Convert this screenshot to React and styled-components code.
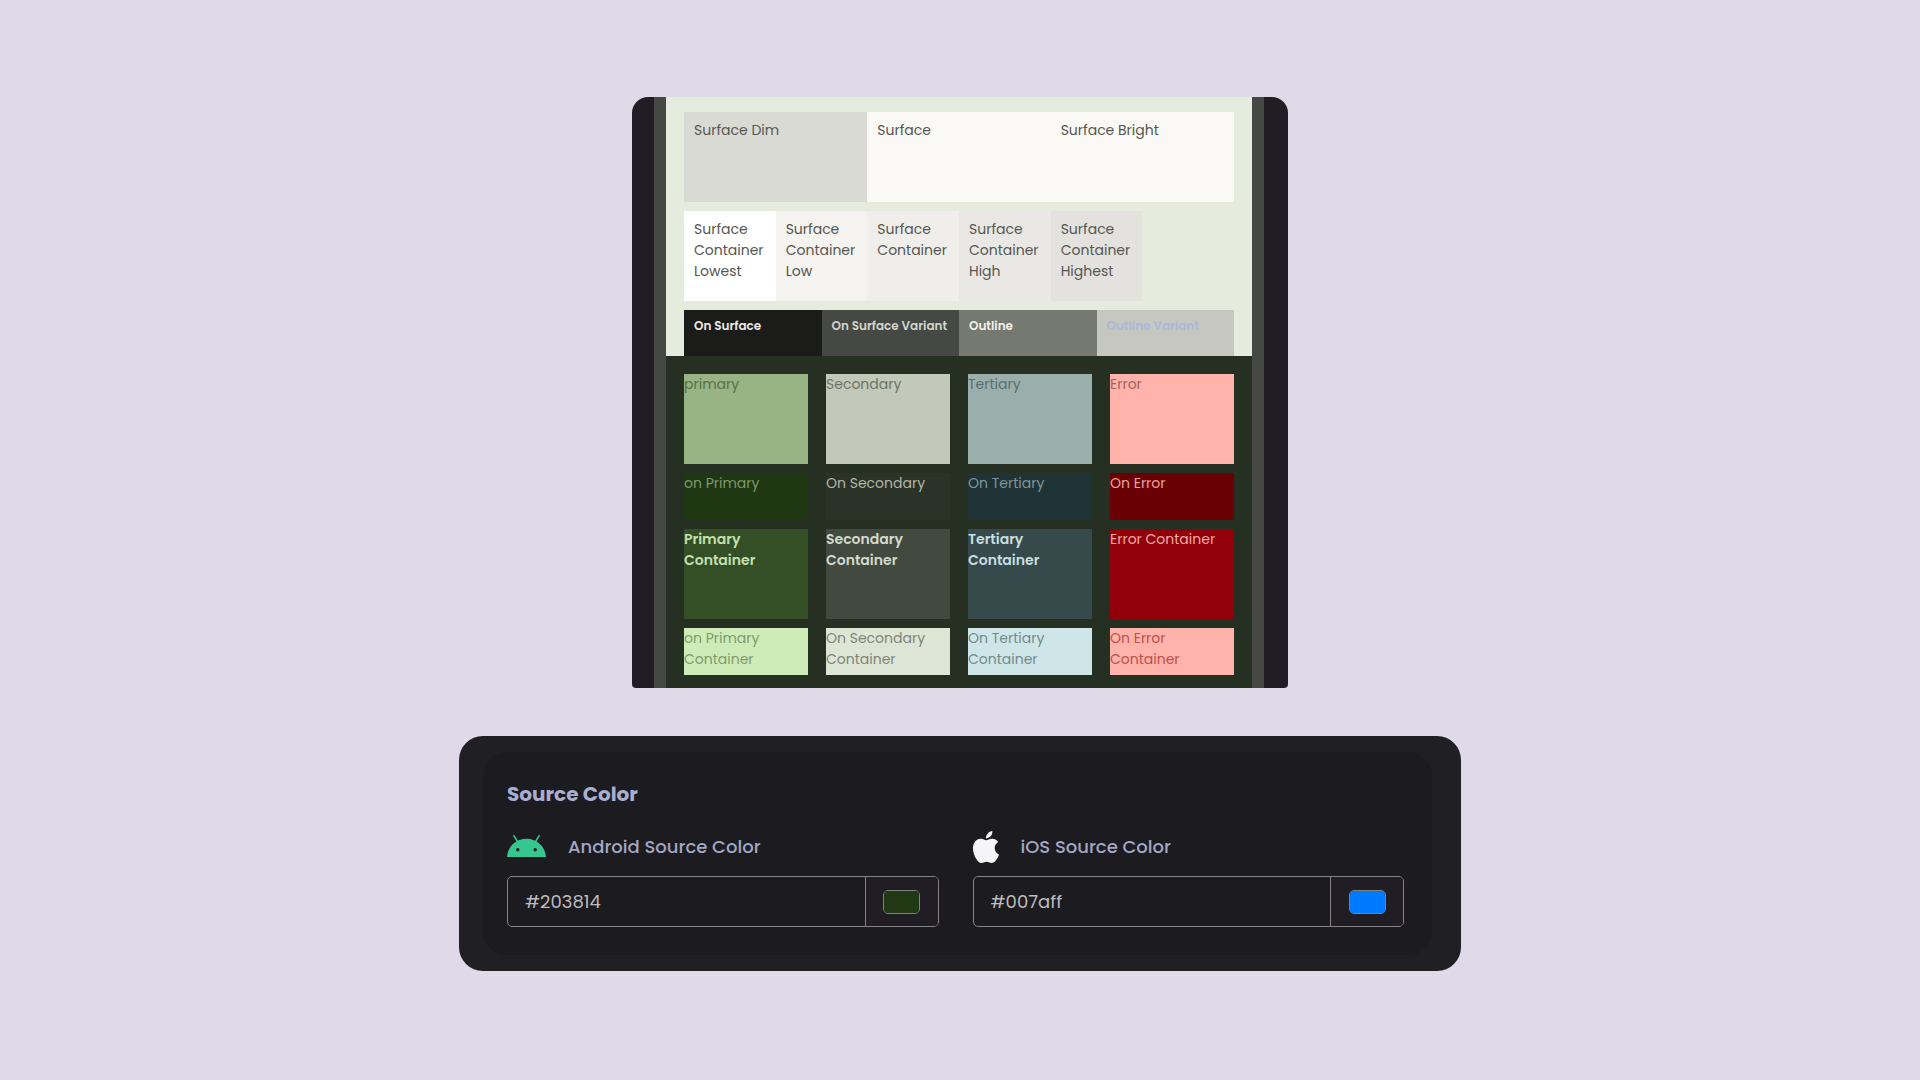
import React, { useState } from 'react'
import styled, { createGlobalStyle } from 'styled-components'
import { SiApple } from 'react-icons/si'

const surfaces = [
  { name: 'Surface Dim', bg: '#dadad5' },
  { name: 'Surface', bg: '#faf9f5' },
  { name: 'Surface Bright', bg: '#faf9f5' },
]

const containers = [
  { name: 'Surface Container Lowest', bg: '#ffffff' },
  { name: 'Surface Container Low', bg: '#f4f3ef' },
  { name: 'Surface Container', bg: '#efeeea' },
  { name: 'Surface Container High', bg: '#e9e8e4' },
  { name: 'Surface Container Highest', bg: '#e3e2de' },
]

const outlines = [
  { name: 'On Surface', bg: '#1b1c19', color: '#e9e9e6' },
  { name: 'On Surface Variant', bg: '#454843', color: '#d2d4ce' },
  { name: 'Outline', bg: '#767872', color: '#f0f0ec' },
  { name: 'Outline Variant', bg: '#c6c7c0', color: '#adb8da' },
]

const roles = [
  { name: 'primary', bg: '#98b384', color: '#58704a' },
  { name: 'Secondary', bg: '#c2c9b9', color: '#6c7466' },
  { name: 'Tertiary', bg: '#9aaeac', color: '#5a706f' },
  { name: 'Error', bg: '#ffb3aa', color: '#a8605a' },
  { name: 'on Primary', bg: '#1f3713', color: '#7d986b', short: true },
  { name: 'On Secondary', bg: '#2b3228', color: '#b0b7a8', short: true },
  { name: 'On Tertiary', bg: '#1f3336', color: '#7f9698', short: true },
  { name: 'On Error', bg: '#690003', color: '#eda39c', short: true },
  { name: 'Primary Container', bg: '#344e25', color: '#c4e0b0', bold: true },
  { name: 'Secondary Container', bg: '#424a3f', color: '#d3dacb', bold: true },
  { name: 'Tertiary Container', bg: '#364a4c', color: '#c8dfe0', bold: true },
  { name: 'Error Container', bg: '#920009', color: '#f3aca5' },
  { name: 'on Primary Container', bg: '#ceecb8', color: '#7f9b6d', short: true },
  { name: 'On Secondary Container', bg: '#dde5d5', color: '#7e8678', short: true },
  { name: 'On Tertiary Container', bg: '#cee6e8', color: '#75898b', short: true },
  { name: 'On Error Container', bg: '#ffb3aa', color: '#bf4f4c', short: true },
]

function AndroidIcon() {
  return (
    <svg width="39" height="24" viewBox="0 0 39 24" aria-hidden="true">
      <path d="M0 22C.8 11.600 9 3.800 19.500 3.800S38.200 11.600 39 22Z" fill="#35c78f" />
      <path d="M7 .8l3.800 6.400M32 .8l-3.800 6.400" stroke="#35c78f" strokeWidth="1.600" strokeLinecap="round" />
      <circle cx="10.800" cy="14.700" r="1.700" fill="#1c1b1f" />
      <circle cx="28.200" cy="14.700" r="1.700" fill="#1c1b1f" />
    </svg>
  )
}

function SourceField({ id, label, icon, initial }) {
  const [value, setValue] = useState(initial)

  return (
    <Field>
      <FieldLabel htmlFor={id}>
        {icon}
        {label}
      </FieldLabel>
      <InputGroup>
        <HexInput id={id} value={value} onChange={(e) => setValue(e.target.value)} />
        <PickerCell>
          <ColorInput type="color" aria-label={label} value={value} onChange={(e) => setValue(e.target.value)} />
        </PickerCell>
      </InputGroup>
    </Field>
  )
}

function App() {
  return (
    <>
      <GlobalStyle />
      <Page>
        <Preview>
          <Frame>
            <LightScheme>
              <SwatchRow $cols={3}>
                {surfaces.map((s) => <Swatch key={s.name} $bg={s.bg}>{s.name}</Swatch>)}
              </SwatchRow>
              <SwatchRow $cols={6}>
                {containers.map((s) => <Swatch key={s.name} $bg={s.bg}>{s.name}</Swatch>)}
              </SwatchRow>
              <SwatchRow $cols={4}>
                {outlines.map((s) => <OutlineSwatch key={s.name} $bg={s.bg} $color={s.color}>{s.name}</OutlineSwatch>)}
              </SwatchRow>
            </LightScheme>
            <DarkScheme>
              {roles.map((r) => (
                <RoleSwatch key={r.name} $bg={r.bg} $color={r.color} $short={r.short} $bold={r.bold}>{r.name}</RoleSwatch>
              ))}
            </DarkScheme>
          </Frame>
        </Preview>
        <Panel>
          <PanelBody>
            <Title>Source Color</Title>
            <Fields>
              <SourceField id="android" label="Android Source Color" initial="#203814" icon={<AndroidIcon />} />
              <SourceField id="ios" label="iOS Source Color" initial="#007aff" icon={<AppleSlot><SiApple size={32} /></AppleSlot>} />
            </Fields>
          </PanelBody>
        </Panel>
      </Page>
    </>
  )
}
export default App

const GlobalStyle = createGlobalStyle`
* {
  box-sizing: border-box;
}
body {
  margin: 0;
  background: #dfd9e8;
  font-family: Poppins, Inter, sans-serif;
}
`

const Page = styled.main`
min-height: 100vh;
display: flex;
flex-direction: column;
align-items: center;
gap: 48px;
padding: 97px 24px;
`

const Preview = styled.section`
width: 100%;
max-width: 656px;
padding: 0 24px 0 22px;
border-radius: 16px 16px 4px 4px;
background: #201e24;
overflow: hidden;
`

const Frame = styled.div`
padding: 0 12px;
background: #454843;
`

const LightScheme = styled.div`
display: flex;
flex-direction: column;
gap: 9px;
padding: 15px 18px 0;
background: #e6ecdd;
`

const SwatchRow = styled.div`
display: grid;
grid-template-columns: repeat(${(p) => p.$cols}, 1fr);
`

const Swatch = styled.div`
min-height: 90px;
padding: 8px 0 0 10px;
background: ${(p) => p.$bg};
color: #555652;
font-size: 14px;
line-height: 21px;
`

const OutlineSwatch = styled.div`
height: 46px;
padding: 5px 0 0 10px;
background: ${(p) => p.$bg};
color: ${(p) => p.$color};
font-size: 12px;
font-weight: 600;
line-height: 21px;
white-space: nowrap;
`

const DarkScheme = styled.div`
display: grid;
grid-template-columns: repeat(4, 1fr);
gap: 9px 18px;
padding: 18px 18px 13px;
background: #263022;
`

const RoleSwatch = styled.div`
min-height: ${(p) => (p.$short ? '47px' : '90px')};
background: ${(p) => p.$bg};
color: ${(p) => p.$color};
font-size: 14px;
font-weight: ${(p) => (p.$bold ? 600 : 400)};
line-height: 21px;
`

const Panel = styled.section`
width: 100%;
max-width: 1002px;
padding: 16px 29px 16px 24px;
border-radius: 24px;
background: #201f23;
`

const PanelBody = styled.div`
padding: 28px 28px 28px 24px;
border-radius: 24px;
background: #1c1b1f;
`

const Title = styled.h2`
margin: 0;
color: #a9aed0;
font-size: 20px;
font-weight: 700;
line-height: 28px;
`

const Fields = styled.div`
display: grid;
grid-template-columns: repeat(2, minmax(0, 1fr));
gap: 34px;
margin-top: 21px;
`

const Field = styled.div`
display: flex;
flex-direction: column;
gap: 12px;
`

const FieldLabel = styled.label`
display: flex;
align-items: center;
gap: 22px;
height: 35px;
color: #a3a7c4;
font-size: 18px;
font-weight: 500;
`

const AppleSlot = styled.span`
display: flex;
justify-content: center;
width: 26px;
color: #f5f5f7;

svg {
  flex: none;
}
`

const InputGroup = styled.div`
display: flex;
height: 51px;
border: 1px solid #858487;
border-radius: 5px;
overflow: hidden;
`

const HexInput = styled.input`
flex: 1;
min-width: 0;
padding: 0 17px;
border: 0;
outline: 0;
background: transparent;
color: #bdbbbf;
font-family: inherit;
font-size: 18px;
`

const PickerCell = styled.div`
display: flex;
align-items: center;
justify-content: center;
width: 73px;
border-left: 1px solid #858487;
background: #201e24;
`

const ColorInput = styled.input`
appearance: none;
width: 37px;
height: 24px;
padding: 0;
border: 1px solid #7d8578;
border-radius: 5px;
background: none;
overflow: hidden;

&::-webkit-color-swatch-wrapper {
  padding: 0;
}
&::-webkit-color-swatch {
  border: 0;
}
`
